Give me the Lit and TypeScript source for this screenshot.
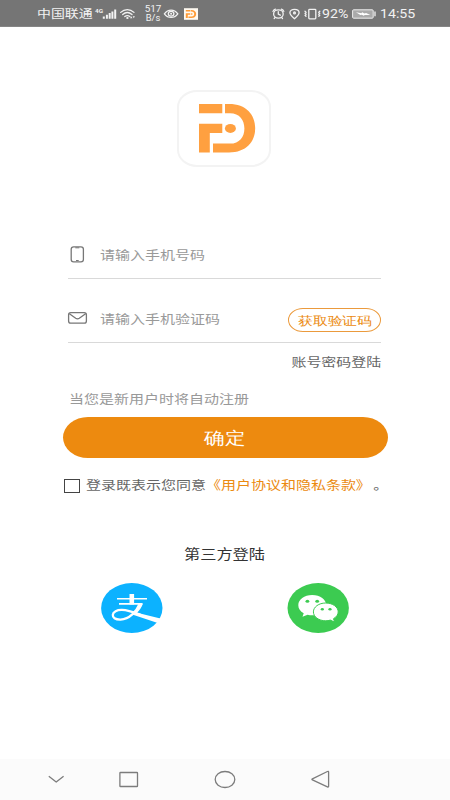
import { LitElement, html, css, svg } from "lit";
import { customElement } from "lit/decorators.js";

const logoMark = svg`
  <path d="M0 0H23.3V9.2H0ZM0 19.8H23.3V29H10.8V48.4H0Z"/>
  <path d="M26 0H30C47 0 56.2 10.5 56.2 24.2S47 48.4 30 48.4H14V39.6H31C40.5 39.6 45.4 32.8 45.4 24.4S40.5 9.2 31 9.2H26Z"/>
  <ellipse cx="31.4" cy="24.4" rx="5.5" ry="4.5"/>`;

@customElement("status-bar")
export class StatusBar extends LitElement {
  static styles = css`
    :host { display: block; height: 27px; background: #757575; color: #f2f2f2;
      font-family: Roboto, "Noto Sans CJK SC", sans-serif; border-bottom: 1px solid #858585; box-sizing: border-box; }
    .bar { display: flex; align-items: center; height: 27px; padding-left: 37px; }
    .t { white-space: nowrap; transform-origin: left center; line-height: 16px; }
    .carrier { width: 58px; font-size: 11.6px; transform: scaleX(1.2); box-sizing: border-box; flex: none; padding-top: 1px; }
    .fit { display: block; flex: none; overflow: visible; }
    .rate { width: 22px; font-size: 8.4px; line-height: 9.3px; text-align: center; margin-left: 5px; flex: none; padding-top: 1px; }
    .rate span { display: block; transform: scaleX(1.18); }
    .rate .unit { transform: scaleX(1.12); }
    .pct { width: 29px; font-size: 12.2px; transform: scaleX(1.16); flex: none; margin-left: -1px; margin-right: 1px; }
    .time { font-size: 12.2px; transform: scaleX(1.16); margin-left: -1px; }
  `;
  render() {
    return html`<div class="bar">
      <span class="t carrier">中国联通</span>
      <svg class="fit" width="42" height="20" viewBox="95 4 42 20" fill="#f2f2f2">
        <text x="95" y="13.3" font-size="6.2" font-weight="700" font-family="Roboto" textLength="8" lengthAdjust="spacingAndGlyphs">4G</text>
        <path d="M102.8 16.5h2v2.3h-2zM105.9 14.8h2v4h-2zM108.7 13h2v5.8h-2zM111.4 11.5h2v7.3h-2zM114.2 9.6h2v9.2h-2z"/>
        <g fill="none" stroke="#f2f2f2" stroke-width="1.3" stroke-linecap="round">
          <path d="M120.7 12.4C124.6 8.6 130 8.6 134 12.4M122.7 14.5C125.5 12 129 12 132 14.5M124.8 16.6C126.5 15.2 128.2 15.2 129.9 16.6"/>
        </g><ellipse cx="127.4" cy="18" rx="1.2" ry=".9"/><path d="M130 18.3l1.2-2 1.2 2zM132.7 16.3h2.2l-1.1 2z"/>
      </svg>
      <div class="rate"><span>517</span><span class="unit">B/s</span></div>
      <svg class="fit" width="36" height="20" viewBox="164 4 36 20" fill="none" stroke="#f2f2f2" stroke-width="1.3">
        <path d="M164.4 13.8C168 8.8 174.2 8.8 177.8 13.8 174.2 18.6 168 18.6 164.4 13.8Z"/>
        <ellipse cx="171.1" cy="13.7" rx="2.8" ry="2.4"/><circle cx="171.1" cy="13.7" r="1" fill="#f2f2f2" stroke="none"/>
        <path d="M184 8.2h14v11.6h-14z" fill="#fffaf2" stroke="none"/>
        <g transform="translate(185.8 10) scale(.185 .167)" fill="#ff9c38" stroke="none">${logoMark}</g>
      </svg>
      <svg class="fit" width="123" height="20" viewBox="198 4 123 20" fill="none" stroke="#f2f2f2" stroke-width="1.3" stroke-linecap="round">
        <ellipse cx="276.4" cy="14" rx="4.8" ry="4.1"/><path d="M276.3 11.6v2.6l2 1M271 11.4q.6-1.7 2.4-2.3M281.8 11.4q-.6-1.7-2.4-2.3M273 17.6l-.8.9M279.7 17.6l.8.9"/>
        <path d="M292.5 18.7C289.5 16.2 287.9 14.8 287.9 12.8 287.9 10.6 290 9.3 292.5 9.3S297.1 10.6 297.1 12.8C297.1 14.8 295.5 16.2 292.5 18.7Z"/><circle cx="292.5" cy="12.9" r=".9"/>
        <rect x="306.8" y="9.3" width="7" height="9.6" rx=".8"/><path d="M303 11.2l1 1-.9 1 .9 1-.9 1 .9 1M317.8 11.2l-1 1 .9 1-.9 1 .9 1-.9 1"/>
      </svg>
      <span class="t pct">92%</span>
      <svg class="fit" width="29" height="20" viewBox="351 4 29 20">
        <rect x="351.6" y="9.8" width="20.6" height="8.4" rx="1" fill="#aaa" stroke="#ededed" stroke-width="1"/>
        <path d="M374 11.5v4.8" stroke="#f2f2f2" stroke-width="1.3"/>
        <path d="M355 12.3l5.4 1 .8-1.1 2.2 1.4 1.7-.7 4.2 2.2-5.7-.2-.7.9-2.2-1-1.4.2z" fill="#fff"/>
      </svg>
      <span class="t time">14:55</span>
    </div>`;
  }
}

@customElement("navigation-bar")
export class NavigationBar extends LitElement {
  static styles = css`
    :host { display: block; height: 41px; background: #fbfbfb; }
    svg { display: block; }
  `;
  render() {
    return html`<svg width="450" height="41" viewBox="0 759 450 41" fill="none" stroke="#7c7c7c" stroke-width="1.3" stroke-linejoin="round">
      <path d="M48.8 776.2L56.2 782 63.6 776.2"/>
      <rect x="119.9" y="772.5" width="17.6" height="14" rx=".6"/>
      <ellipse cx="225" cy="779.5" rx="9.8" ry="8"/>
      <path d="M312.4 778.8L327.4 771.5Q328.6 771 328.6 772V786.2Q328.6 787.4 327.4 786.8L312.4 779.9Q311.4 779.4 312.4 778.8Z"/>
    </svg>`;
  }
}

@customElement("app-root")
export class AppRoot extends LitElement {
  static styles = css`
    :host { display: flex; flex-direction: column; width: 450px; height: 800px; background: #fff; overflow: hidden;
      font-family: "Noto Sans CJK SC", sans-serif; text-spacing-trim: space-all; }
    svg { display: block; flex: none; }
    main { flex: 1; display: flex; flex-direction: column; }
    .t { display: block; font-size: 12.4px; line-height: 18px; white-space: nowrap; color: #999;
      transform: scaleX(1.21); transform-origin: left center; }
    .logo { box-sizing: border-box; width: 94px; height: 77px; margin: 63px 0 0 177px; border: 2px solid #f3f3f3;
      border-radius: 20px / 17px; display: flex; align-items: center; padding-left: 20px; }
    .field { box-sizing: border-box; display: flex; align-items: center; margin: 0 69px 0 68px; border-bottom: 1px solid #d9d9d9; }
    .phone { height: 48px; margin-top: 64px; }
    .code { height: 64px; padding-top: 17px; }
    .field svg { margin-left: -1px; margin-right: 12px; }
    .field .t { flex: 1; }
    .send { box-sizing: border-box; width: 93px; height: 24px; margin: 2px 0 0; padding: 0; background: #fff; flex: none;
      border: 1px solid #eb9a3c; border-radius: 15px / 12px; display: flex; align-items: center; justify-content: center; }
    .field .send .t { flex: none; color: #eb8a10; transform: scaleX(1.235); transform-origin: center; padding-top: 1px; }
    .switch { display: flex; justify-content: flex-end; margin: 10px 69px 0; }
    .switch .t { color: #666; transform-origin: right center; }
    .hint { margin: 19px 0 0 68.5px; }
    .submit { width: 325px; height: 41px; margin: 9px 0 0 62.5px; border: 0; padding: 0; background: #ed8a0f; border-radius: 25px / 20.5px;
      display: flex; justify-content: center; align-items: center; }
    .submit .t { color: #fff; font-size: 17.4px; line-height: 24px; transform-origin: center; }
    .agree { display: flex; align-items: center; margin: 17px 0 0 64px; height: 20px; }
    .box { box-sizing: border-box; width: 16px; height: 14px; border: 1.3px solid #444; margin: 2px 6px 0 0; }
    .agree .t { color: #666; }
    .agree a { color: #eb8a10; margin-right: 2px; }
    .third { display: flex; justify-content: center; margin-top: 49px; padding-right: 1px; }
    .third .t { color: #333; font-size: 13.4px; transform-origin: center; }
    .providers { display: flex; gap: 124px; margin: 21px 0 0 101px; }
  `;
  render() {
    return html`
      <status-bar></status-bar>
      <main>
        <div class="logo"><svg width="57" height="49" viewBox="0 0 57 49" fill="#ffa040">${logoMark}</svg></div>
        <div class="field phone">
          <svg width="21" height="18" viewBox="67 246 21 18" fill="none" stroke="#777" stroke-width="1.3">
            <rect x="71.2" y="246.8" width="12.2" height="15" rx="2.4"/><path d="M75.3 247.8h4M76 260.5h2.7" stroke-width="1"/>
          </svg>
          <span class="t">请输入手机号码</span>
        </div>
        <div class="field code">
          <svg width="21" height="18" viewBox="67 311 21 18" fill="none" stroke="#777" stroke-width="1.3">
            <rect x="68.6" y="313.6" width="17.8" height="10.6" rx="2.2"/><path d="M69.4 314.8L75.7 319.3Q77.5 320.5 79.3 319.3L85.6 314.8"/>
          </svg>
          <span class="t">请输入手机验证码</span>
          <button class="send"><span class="t">获取验证码</span></button>
        </div>
        <div class="switch"><span class="t">账号密码登陆</span></div>
        <span class="t hint">当您是新用户时将自动注册</span>
        <button class="submit"><span class="t">确定</span></button>
        <div class="agree"><span class="box"></span><span class="t">登录既表示您同意<a>《用户协议和隐私条款》</a>。</span></div>
        <div class="third"><span class="t">第三方登陆</span></div>
        <div class="providers">
          <svg width="62" height="50" viewBox="101 583 62 50">
            <ellipse cx="131.8" cy="608" rx="30.7" ry="25" fill="#0cb2ff"/>
            <g fill="none" stroke="#fff">
              <path d="M117 598.8H147M119 603.9H142.3" stroke-width="1.6"/>
              <path d="M131.8 594V604.5" stroke-width="4.6"/>
              <path d="M139.6 603.9C136.5 611.3 129.6 619.3 120.5 619.6 115 619.7 112.6 617.5 112.8 614.8 113 611.8 117 609.7 122 609.9 129 610.2 134 612.4 141 615" stroke-width="2.3"/>
            </g>
            <path d="M139.2 603.4H143C141.4 607.6 139.3 610.5 137 612.8L160.4 618.6 158.6 621.9 157 622.8 131.5 614.2C135 612 137.8 608 139.2 603.4Z" fill="#fff"/>
          </svg>
          <svg width="62" height="50" viewBox="287 583 62 50">
            <ellipse cx="318.2" cy="608" rx="30.7" ry="25" fill="#3ccb51"/>
            <path d="M312.2 595C304.2 595 298.3 599.5 298.3 605.2 298.3 608.6 300.3 611.3 303.7 613.2L302.5 616.8 307.6 614.7C309 615.1 310.6 615.3 312.4 615.3 320.5 615.3 326.2 610.9 326.2 605.2S320.3 595 312.2 595Z" fill="#fff"/>
            <path d="M325.7 603C318.8 603 313.4 607 313.4 611.9S318.8 620.8 325.7 620.8C327.3 620.8 328.9 620.6 330.3 620.1L334.6 622.1 333.5 618.7C336.3 617 338.2 614.7 338.2 611.9 338.2 607 332.7 603 325.7 603Z" fill="#fff" stroke="#3ccb51" stroke-width="1"/>
            <g fill="#3ccb51"><ellipse cx="307.4" cy="601.2" rx="1.9" ry="1.5"/><ellipse cx="317.2" cy="601.2" rx="1.9" ry="1.5"/><ellipse cx="322.3" cy="609.2" rx="1.6" ry="1.3"/><ellipse cx="330" cy="609.2" rx="1.6" ry="1.3"/></g>
          </svg>
        </div>
      </main>
      <navigation-bar></navigation-bar>`;
  }
}
